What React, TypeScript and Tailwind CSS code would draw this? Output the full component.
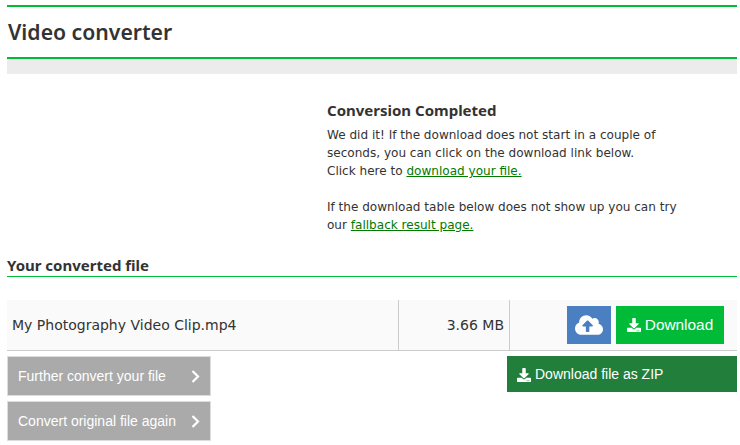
import { FaCloudUploadAlt, FaDownload } from "react-icons/fa";

const Chevron = () => (
  <svg width="9" height="13" viewBox="0 0 9 13" fill="none" stroke="white" strokeWidth="2.2">
    <polyline points="1.5,1 7,6.5 1.5,12" />
  </svg>
);

const App = () => {
  return (
    <div className="w-[740px] h-[445px] overflow-hidden bg-white pl-[7px] pr-[3px] pt-[5px] font-['DejaVu_Sans',sans-serif] text-[#333]">
      <div className="border-t-2 border-b-2 border-[#00bb38] h-[54px] flex items-center">
        <h1 className="pl-[1px] text-[21.2px] font-semibold text-[#333] font-['Noto_Sans',sans-serif]">Video converter</h1>
      </div>
      <div className="h-[15px] bg-[#ececec]"></div>

      <div className="pl-[320px] pt-[26px] h-[176px]">
        <h2 className="text-[15px] leading-[20px] font-bold font-['Noto_Sans',sans-serif]">Conversion Completed</h2>
        <p className="mt-[6px] text-[12.06px] leading-[18px]">
          We did it! If the download does not start in a couple of
          <br />
          seconds, you can click on the download link below.
          <br />
          Click here to <a href="#file" className="text-[#007a00] underline">download your file.</a>
          <br />
          <br />
          If the download table below does not show up you can try
          <br />
          our <a href="#fallback" className="text-[#007a00] underline">fallback result page.</a>
        </p>
      </div>

      <div className="h-[27px] pt-[5px] border-b border-[#00bb38] flex items-center">
        <h3 className="text-[15px] font-bold font-['Noto_Sans',sans-serif]">Your converted file</h3>
      </div>

      <div className="mt-[23px] h-[51px] flex bg-[#fafafa] border-b border-[#ccc] text-[14px]">
        <div className="w-[391px] pl-[5px] flex items-center">My Photography Video Clip.mp4</div>
        <div className="w-[111px] border-l border-[#ccc] pr-[5px] flex items-center justify-end">3.66 MB</div>
        <div className="flex-1 border-l border-[#ccc] pr-[13px] flex items-center justify-end gap-[5px]">
          <div className="w-[44px] h-[38px] bg-[#4a7fc1] text-white flex items-center justify-center">
            <FaCloudUploadAlt className="text-[28px]" />
          </div>
          <div className="w-[108px] h-[38px] bg-[#00bb38] text-white flex items-center justify-center gap-[4px] text-[15.4px] font-['Liberation_Sans',sans-serif]">
            <FaDownload className="text-[14px]" />
            Download
          </div>
        </div>
      </div>

      <div className="flex justify-between items-start mt-[5px]">
        <div className="flex flex-col gap-[5px]">
          <div className="w-[204px] h-[40px] bg-[#aaa] border border-[#ddd] text-white pl-[10px] pr-[10px] flex items-center justify-between text-[14px] font-['Liberation_Sans',sans-serif]">
            Further convert your file
            <Chevron />
          </div>
          <div className="w-[204px] h-[40px] bg-[#aaa] border border-[#ddd] text-white pl-[10px] pr-[10px] flex items-center justify-between text-[14px] font-['Liberation_Sans',sans-serif]">
            Convert original file again
            <Chevron />
          </div>
        </div>
        <div className="w-[230px] h-[36px] bg-[#217e3b] text-white pl-[10px] pt-[1px] flex items-center gap-[4px] text-[14px] font-['Liberation_Sans',sans-serif]">
          <FaDownload className="text-[14px]" />
          Download file as ZIP
        </div>
      </div>
    </div>
  );
};

export default App;
